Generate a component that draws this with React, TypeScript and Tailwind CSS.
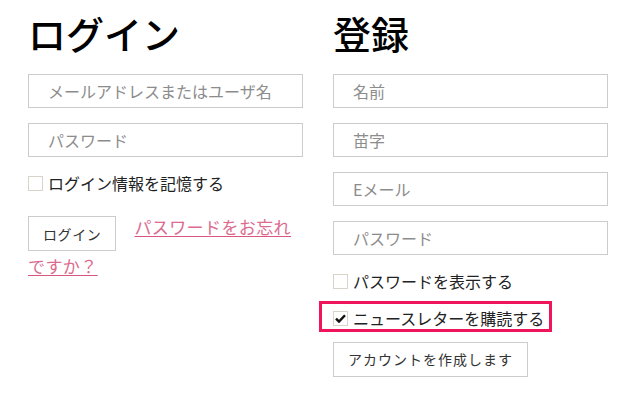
import React from 'react';

const font = "font-['Noto_Sans_CJK_JP','Noto_Sans',sans-serif]";

function Field({ placeholder, type = 'text' }: { placeholder: string; type?: string }) {
  return (
    <input
      type={type}
      placeholder={placeholder}
      className="block w-full h-[34px] border border-[#cccccc] bg-white px-[19px] text-[16px] text-[#333] placeholder:text-[#8c8c8c] outline-none"
    />
  );
}

function Check({ label, checked = false }: { label: string; checked?: boolean }) {
  return (
    <label className="flex items-center h-[22px] text-[16px] leading-[22px] text-[#222]">
      <span className="flex items-center justify-center w-[15px] h-[15px] border border-[#d8d4c8] bg-white mr-[5px] shrink-0">
        {checked && (
          <svg width="11" height="9" viewBox="0 0 11 9">
            <path d="M1 4.6 L4 7.6 L10 1.2" fill="none" stroke="#111" strokeWidth="2.4" />
          </svg>
        )}
      </span>
      {label}
    </label>
  );
}

export default function App() {
  return (
    <div className={`${font} flex gap-[30px] pl-[28px] pr-[20px] pt-[10px] bg-white min-h-[404px]`}>
      {/* Login */}
      <div className="w-[275px]">
        <h2 className="text-[38px] leading-[46px] font-medium text-black">ログイン</h2>
        <div className="mt-[18px]">
          <Field placeholder="メールアドレスまたはユーザ名" />
        </div>
        <div className="mt-[15px]">
          <Field placeholder="パスワード" type="password" />
        </div>
        <div className="mt-[15px]">
          <Check label="ログイン情報を記憶する" />
        </div>
        <div className="mt-[22px] text-[17px] leading-[22px] tracking-[0.4px]">
          <button
            type="button"
            className="inline-block align-top mb-[4px] h-[35px] px-[14px] border border-[#cccccc] bg-white text-[14px] tracking-[0.6px] text-[#333]"
          >
            ログイン
          </button>
          <a href="#" className="ml-[18px] text-[#dc6b8f] underline decoration-[#d9577f] underline-offset-[2px]">
            パスワードをお忘れですか？
          </a>
        </div>
      </div>

      {/* Register */}
      <div className="w-[275px]">
        <h2 className="text-[38px] leading-[46px] font-medium text-black">登録</h2>
        <div className="mt-[18px]">
          <Field placeholder="名前" />
        </div>
        <div className="mt-[15px]">
          <Field placeholder="苗字" />
        </div>
        <div className="mt-[15px]">
          <Field placeholder="Eメール" type="email" />
        </div>
        <div className="mt-[15px]">
          <Field placeholder="パスワード" type="password" />
        </div>
        <div className="mt-[15px]">
          <Check label="パスワードを表示する" />
        </div>
        <div className="mt-[9px] -ml-[14px] w-fit border-[3px] border-[#f0145a] pl-[11px] pr-[5px] pt-[3px]">
          <Check label="ニュースレターを購読する" checked />
        </div>
        <button
          type="button"
          className="block mt-[10px] h-[35px] px-[14px] border border-[#cccccc] bg-white text-[14px] tracking-[1px] text-[#333]"
        >
          アカウントを作成します
        </button>
      </div>
    </div>
  );
}
